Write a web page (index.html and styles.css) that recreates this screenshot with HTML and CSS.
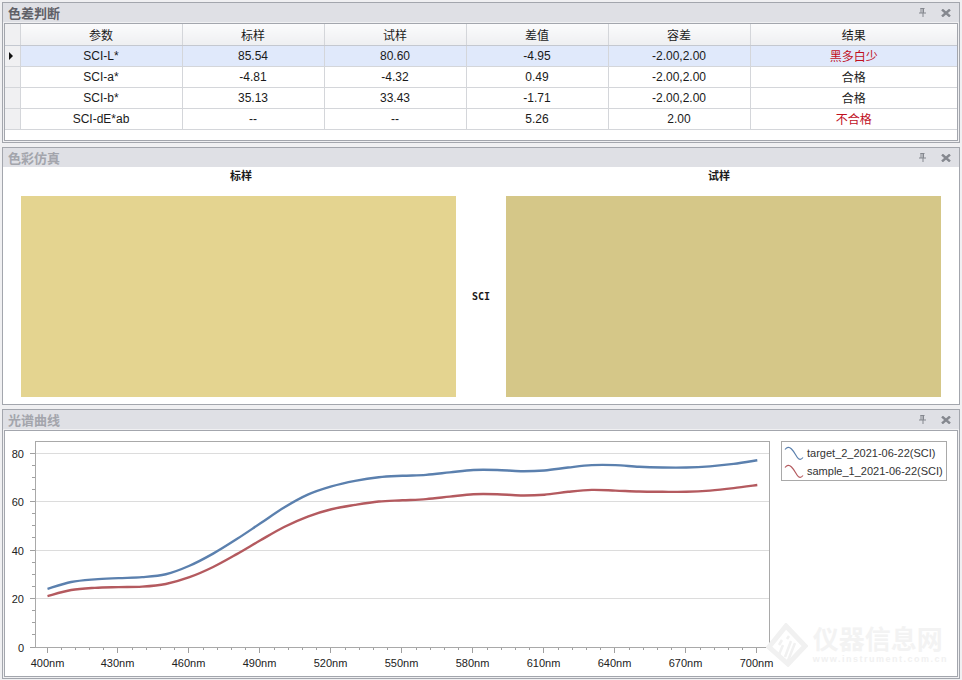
FILE: index.html
```html
<!DOCTYPE html>
<html lang="zh-CN">
<head>
    <meta charset="UTF-8">
    <title>色差判断</title>
    <link rel="stylesheet" href="styles.css">
</head>
<body>
    <div class="panel panel-table">
        <div class="panel-title active">
            <span>色差判断</span>
            <svg class="pin" width="7" height="9" viewBox="0 0 7 9"><path d="M1.500 0h4v1h-.5v3.500h2v1h-2.500v3.500h-1v-3.500h-3.500v-1h1.500v-3.500h-.5z M2.500 1v3.500h1v-3.500z" fill-rule="evenodd"/></svg>
            <svg class="close" width="10" height="8" viewBox="0 0 10 8"><path d="M1 .5l8 7M9 .5l-8 7"/></svg>
        </div>
        <div class="inner-box grid-box">
            <table class="grid">
                <colgroup>
                    <col class="col-head"><col class="col-name"><col class="col-num"><col class="col-num"><col class="col-num"><col class="col-num"><col>
                </colgroup>
                <thead>
                    <tr><th class="row-head"></th><th>参数</th><th>标样</th><th>试样</th><th>差值</th><th>容差</th><th>结果</th></tr>
                </thead>
                <tbody>
                    <tr class="selected"><td class="row-head"><span class="arrow"></span></td><td>SCI-L*</td><td>85.54</td><td>80.60</td><td>-4.95</td><td>-2.00,2.00</td><td class="fail">黑多白少</td></tr>
                    <tr><td class="row-head"></td><td>SCI-a*</td><td>-4.81</td><td>-4.32</td><td>0.49</td><td>-2.00,2.00</td><td>合格</td></tr>
                    <tr><td class="row-head"></td><td>SCI-b*</td><td>35.13</td><td>33.43</td><td>-1.71</td><td>-2.00,2.00</td><td>合格</td></tr>
                    <tr><td class="row-head"></td><td>SCI-dE*ab</td><td>--</td><td>--</td><td>5.26</td><td>2.00</td><td class="fail">不合格</td></tr>
                </tbody>
            </table>
        </div>
    </div>

    <div class="panel panel-sim">
        <div class="panel-title">
            <span>色彩仿真</span>
            <svg class="pin" width="7" height="9" viewBox="0 0 7 9"><path d="M1.500 0h4v1h-.5v3.500h2v1h-2.500v3.500h-1v-3.500h-3.500v-1h1.500v-3.500h-.5z M2.500 1v3.500h1v-3.500z" fill-rule="evenodd"/></svg>
            <svg class="close" width="10" height="8" viewBox="0 0 10 8"><path d="M1 .5l8 7M9 .5l-8 7"/></svg>
        </div>
        <div class="sim-body">
            <div class="sim-col">
                <div class="sim-label label-target">标样</div>
                <div class="swatch swatch-target"></div>
            </div>
            <div class="sim-mode">SCI</div>
            <div class="sim-col">
                <div class="sim-label label-sample">试样</div>
                <div class="swatch swatch-sample"></div>
            </div>
        </div>
    </div>

    <div class="panel panel-chart">
        <div class="panel-title">
            <span>光谱曲线</span>
            <svg class="pin" width="7" height="9" viewBox="0 0 7 9"><path d="M1.500 0h4v1h-.5v3.500h2v1h-2.500v3.500h-1v-3.500h-3.500v-1h1.500v-3.500h-.5z M2.500 1v3.500h1v-3.500z" fill-rule="evenodd"/></svg>
            <svg class="close" width="10" height="8" viewBox="0 0 10 8"><path d="M1 .5l8 7M9 .5l-8 7"/></svg>
        </div>
        <div class="inner-box chart-box">
            <svg id="chart" class="chart" width="771" height="245" viewBox="5 431 771 245"></svg>
            <div class="legend">
                <div class="legend-item">
                    <svg width="20" height="16" viewBox="0 0 20 16"><path class="line-target" d="M1 4.500C3 2 5 1.500 7.500 4S11 9 13 12s4 3 6 .5"/></svg>
                    <span>target_2_2021-06-22(SCI)</span>
                </div>
                <div class="legend-item">
                    <svg width="20" height="16" viewBox="0 0 20 16"><path class="line-sample" d="M1 4.500C3 2 5 1.500 7.500 4S11 9 13 12s4 3 6 .5"/></svg>
                    <span>sample_1_2021-06-22(SCI)</span>
                </div>
            </div>
            <div class="watermark">
                <svg width="42" height="44" viewBox="0 0 42 44">
                    <path class="mark-frame" d="M20 3L39 23 22 41 3 24z"/>
                    <path class="mark-strokes" d="M13 22l3-5M12 34l5-12M21 16l2-3M19 34l6-16M29 20l-8 20"/>
                </svg>
                <div class="watermark-text">
                    <div class="watermark-name">仪器信息网</div>
                    <div class="watermark-url">www.instrument.com.cn</div>
                </div>
            </div>
        </div>
    </div>

    <script src="chart.js"></script>
</body>
</html>
```

FILE: styles.css
```css
* {
    box-sizing: border-box;
    margin: 0;
    padding: 0;
}

body {
    background: #f0f0f2;
    padding: 2px 2px 0;
    width: 962px;
    height: 680px;
    overflow: hidden;
    font-family: "Liberation Sans", "Noto Sans CJK SC", sans-serif;
    font-size: 12px;
    color: #1a1a1a;
}

.panel {
    display: flex;
    flex-direction: column;
    background: #f0f0f2;
    border: 1px solid #a3a6ad;
    margin-bottom: 4px;
}

.panel-table { height: 141px; }
.panel-sim { height: 258px; }
.panel-chart { height: 270px; margin-bottom: 0; }

.panel-title {
    display: flex;
    align-items: center;
    height: 19px;
    flex-shrink: 0;
    padding: 0 8px 0 5px;
    background: #dfe0e5;
    color: #a3a5ac;
    font-size: 13px;
    font-weight: bold;
}

.panel-title.active { color: #5f6068; }
.panel-title span { flex: 1; }

.pin { fill: #85888f; margin-right: 15px; }
.close { fill: none; stroke: #85888f; stroke-width: 2.400; }

.inner-box {
    position: relative;
    flex: 1;
    margin: 1px;
    border: 1px solid #a3a6ad;
    background: #fff;
}

/* result table */
.grid {
    width: 100%;
    table-layout: fixed;
    border-collapse: collapse;
}

.col-head { width: 15px; }
.col-name { width: 162px; }
.col-num { width: 142px; }

.grid th,
.grid td {
    height: 21px;
    padding: 0;
    text-align: center;
    font-weight: normal;
    border-right: 1px solid #d4d6da;
    border-bottom: 1px solid #d4d6da;
}

.grid th {
    background: linear-gradient(#fbfbfc, #eeeff1);
    border-bottom-color: #c4c8d0;
}

.grid .row-head { background: #f0f0f2; }
.grid th:last-child,
.grid td:last-child { border-right: 0; }

.selected td { background: #e0e9fb; }
.grid .fail { color: #c00f1e; }

.arrow {
    display: inline-block;
    margin-right: 2px;
    border-left: 4px solid #111;
    border-top: 4px solid transparent;
    border-bottom: 4px solid transparent;
    vertical-align: middle;
}

/* colour simulation */
.sim-body {
    display: flex;
    flex: 1;
    background: #fff;
    padding: 0 18px 7px;
}

.sim-col {
    display: flex;
    flex-direction: column;
    width: 435px;
}

.sim-label {
    height: 29px;
    line-height: 19px;
    text-align: center;
    font-size: 11px;
    font-weight: bold;
}

.label-target { padding-left: 5px; }
.label-sample { padding-right: 9px; }

.swatch { flex: 1; }
.swatch-target { background: #e4d490; }
.swatch-sample { background: #d5c788; }

.sim-mode {
    flex: 1;
    align-self: center;
    margin-top: 29px;
    text-align: center;
    font-family: "DejaVu Sans Mono", monospace;
    font-size: 10px;
    font-weight: bold;
}

/* spectrum chart */
.chart-box {
    display: flex;
    align-items: flex-start;
}

.chart { display: block; flex-shrink: 0; }
.chart text { font-family: "Liberation Sans", sans-serif; font-size: 11px; fill: #222; }
.plot-frame { fill: #fff; stroke: #a9a9a9; }
.grid-line { stroke: #dcdcdc; }
.tick { stroke: #a0a0a0; }

.line-target,
.line-sample { fill: none; stroke-width: 1.200; }
.curve { stroke-width: 2.400; stroke-linejoin: round; }
.line-target { stroke: #5b80ae; }
.line-sample { stroke: #b45a5f; }

.legend {
    width: 166px;
    height: 40px;
    margin: 10px 0 0 5px;
    padding: 2px;
    border: 1px solid #a9a9a9;
}

.legend-item {
    display: flex;
    align-items: center;
    gap: 3px;
    height: 18px;
    font-size: 11px;
    color: #333;
    white-space: nowrap;
}

.watermark {
    position: absolute;
    right: 9px;
    bottom: 9px;
    display: flex;
    align-items: center;
    gap: 5px;
    pointer-events: none;
}

.mark-frame { fill: none; stroke: #f1f1f1; stroke-width: 5; }
.mark-strokes { fill: none; stroke: #f1f1f1; stroke-width: 2.500; }

.watermark-name {
    font-size: 26px;
    font-weight: bold;
    line-height: 27px;
    color: #f3f3f3;
}

.watermark-url {
    font-size: 9px;
    font-weight: bold;
    line-height: 10px;
    letter-spacing: 1.500px;
    color: #f1f1f1;
    white-space: nowrap;
}
```

FILE: chart.js
```js
const NS = 'http://www.w3.org/2000/svg';
const chart = document.getElementById('chart');

const target = [24, 26.8, 27.9, 28.4, 28.8, 30, 33.5, 38.5, 44.5, 51, 57.5, 62.8, 66.2, 68.5, 70, 70.6, 71, 72, 73, 73, 72.5, 72.8, 74, 75, 75, 74.3, 74, 74, 74.5, 75.5, 77];
const sample = [21, 23.5, 24.4, 24.7, 24.9, 26, 28.8, 33, 38.3, 44, 49.5, 53.8, 56.8, 58.6, 60, 60.5, 61, 62, 63, 63, 62.5, 62.8, 64, 64.8, 64.5, 64.1, 64, 64, 64.5, 65.5, 66.8];

const xOf = nm => 47.5 + (nm - 400) * 2.366;
const yOf = v => 647 - v * 2.425;

function add(tag, attrs, text) {
    const el = document.createElementNS(NS, tag);
    Object.keys(attrs).forEach(k => el.setAttribute(k, attrs[k]));
    if (text) el.textContent = text;
    chart.appendChild(el);
}

add('rect', { class: 'plot-frame', x: 35.5, y: 441.5, width: 734, height: 206 });

for (let v = 0; v <= 80; v += 5) {
    const y = Math.floor(yOf(v)) + 0.5;
    add('line', { class: 'tick', x1: v % 20 ? 32 : 30, x2: 35, y1: y, y2: y });
    if (v % 20 === 0) {
        if (v > 0) add('line', { class: 'grid-line', x1: 36, x2: 769, y1: y, y2: y });
        add('text', { x: 24, y: y + 4, 'text-anchor': 'end' }, String(v));
    }
}

for (let nm = 400; nm <= 714; nm += 6) {
    const x = Math.round(xOf(nm)) - 0.5;
    const major = (nm - 400) % 30 === 0;
    add('line', { class: 'tick', x1: x, x2: x, y1: 648, y2: major ? 653 : 650 });
    if (major && nm <= 700) add('text', { x: x, y: 667, 'text-anchor': 'middle' }, nm + 'nm');
}

// catmull-rom through the 10nm samples
function curvePath(values) {
    const pts = values.map((v, i) => [xOf(400 + i * 10), yOf(v)]);
    let d = 'M' + pts[0].join(' ');
    for (let i = 0; i < pts.length - 1; i++) {
        const p0 = pts[i - 1] || pts[i];
        const p1 = pts[i];
        const p2 = pts[i + 1];
        const p3 = pts[i + 2] || p2;
        const c1 = [p1[0] + (p2[0] - p0[0]) / 6, p1[1] + (p2[1] - p0[1]) / 6];
        const c2 = [p2[0] - (p3[0] - p1[0]) / 6, p2[1] - (p3[1] - p1[1]) / 6];
        d += ' C' + c1.join(' ') + ' ' + c2.join(' ') + ' ' + p2.join(' ');
    }
    return d;
}

add('path', { class: 'curve line-target', d: curvePath(target) });
add('path', { class: 'curve line-sample', d: curvePath(sample) });
```
